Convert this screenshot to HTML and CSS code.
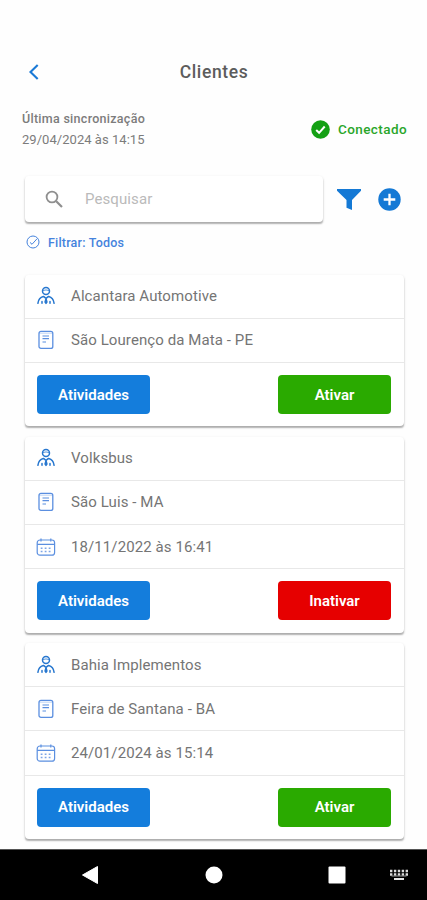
FILE: index.html
```html
<!DOCTYPE html>
<html lang="pt-BR">
<head>
<meta charset="utf-8">
<title>Clientes</title>
<link rel="stylesheet" href="styles.css">
</head>
<body>
<svg class="defs" width="0" height="0">
  <symbol id="person" viewBox="0 0 18 20">
    <g fill="none" stroke="currentColor" stroke-width="1.5" stroke-linecap="round" stroke-linejoin="round">
      <circle cx="9" cy="5" r="3.5"/><path d="M6 4.4Q9 3.4 12 4.4" stroke-width=".8"/><path d="M6.3 10.6C3.2 11.4 1.4 13.8 .9 17.3M11.7 10.6C14.8 11.4 16.6 13.8 17.1 17.3M5 17.3V15.4M13 17.3V15.4M6.8 10.6L9 12.4L11.2 10.6M9 12.6L8.1 16L9 17.4L9.9 16Z"/>
    </g>
  </symbol>
  <symbol id="note" viewBox="0 0 16 20">
    <g fill="none" stroke="currentColor" stroke-width="1.3">
      <rect x="1" y="1.4" width="13.8" height="17" rx="2"/><path d="M1.2 3.2H14.6" opacity=".3"/><path d="M4.5 6H11M4.5 8.7H11M4.5 12H8" stroke-width="1.2"/>
    </g>
  </symbol>
  <symbol id="calendar" viewBox="0 0 20 20">
    <g fill="none" stroke="currentColor" stroke-width="1.2">
      <rect x="1.2" y="3" width="17.4" height="15.2" rx="2.8"/><path d="M1.2 7.4H18.6M5 1.4V4.5M14.8 1.4V4.5"/><path d="M4.7 11.3H16M4.7 14.5H16" stroke-width="1.6" stroke-dasharray="1.8 2.2" opacity=".8"/>
    </g>
  </symbol>
</svg>
<div class="screen">
  <header class="top">
    <svg class="back" viewBox="0 0 12 18"><path d="M9.7 2L2.5 9L9.7 16" fill="none" stroke="currentColor" stroke-width="2.1"/></svg>
    <h1>Clientes</h1>
  </header>
  <section class="sync">
    <div class="sync-text"><div class="sync-label">Última sincronização</div><div class="sync-date">29/04/2024 às 14:15</div></div>
    <div class="status">
      <svg width="19" height="19" viewBox="0 0 19 19"><circle cx="9.5" cy="9.5" r="9.3" fill="#14a014"/><path d="M5.2 10L8.1 12.8L13.7 6.5" fill="none" stroke="#fff" stroke-width="2"/></svg>
      <span>Conectado</span>
    </div>
  </section>
  <section class="search-row">
    <div class="search">
      <svg width="19" height="19" viewBox="0 0 19 19" fill="none" stroke="#8f8f8f"><circle cx="7" cy="7" r="5.4" stroke-width="1.8"/><path d="M11.2 11.2L17 17" stroke-width="2.2"/></svg>
      <span>Pesquisar</span>
    </div>
    <svg class="funnel" width="26" height="23" viewBox="0 0 26 23"><path d="M1 1H25V2.8L16 12V22L10.5 19.8V12L1 2.8Z" fill="currentColor"/></svg>
    <svg class="add" width="23" height="23" viewBox="0 0 23 23"><circle cx="11.5" cy="11.5" r="11.2" fill="currentColor"/><path d="M11.5 5.7V17.3M5.7 11.5H17.3" stroke="#fff" stroke-width="2.3"/></svg>
  </section>
  <div class="filter">
    <svg width="14" height="14" viewBox="0 0 14 14" fill="none" stroke="currentColor"><circle cx="7" cy="7" r="6"/><path d="M4 7.4L6 9.3L11 3.8"/></svg>
    <span>Filtrar: Todos</span>
  </div>
  <main class="list">
    <article class="card">
      <div class="row"><svg class="icon person"><use href="#person"/></svg><span>Alcantara Automotive</span></div>
      <div class="row"><svg class="icon"><use href="#note"/></svg><span>São Lourenço da Mata - PE</span></div>
      <div class="actions"><button class="btn">Atividades</button><button class="btn green">Ativar</button></div>
    </article>
    <article class="card">
      <div class="row"><svg class="icon person"><use href="#person"/></svg><span>Volksbus</span></div>
      <div class="row"><svg class="icon"><use href="#note"/></svg><span>São Luis - MA</span></div>
      <div class="row"><svg class="icon"><use href="#calendar"/></svg><span>18/11/2022 às 16:41</span></div>
      <div class="actions"><button class="btn">Atividades</button><button class="btn red">Inativar</button></div>
    </article>
    <article class="card">
      <div class="row"><svg class="icon person"><use href="#person"/></svg><span>Bahia Implementos</span></div>
      <div class="row"><svg class="icon"><use href="#note"/></svg><span>Feira de Santana - BA</span></div>
      <div class="row"><svg class="icon"><use href="#calendar"/></svg><span>24/01/2024 às 15:14</span></div>
      <div class="actions"><button class="btn">Atividades</button><button class="btn green">Ativar</button></div>
    </article>
  </main>
  <nav class="navbar">
    <svg width="18" height="20" viewBox="0 0 18 20"><path d="M1.5 10L16.5 1.5V18.5Z" fill="#fff" stroke="#fff" stroke-linejoin="round"/></svg>
    <svg width="18" height="18" viewBox="0 0 18 18"><circle cx="9" cy="9" r="8.5" fill="#fff"/></svg>
    <svg width="18" height="18" viewBox="0 0 18 18"><rect x=".5" y=".5" width="17" height="17" rx="1" fill="#fff"/></svg>
    <svg width="18" height="12" viewBox="0 0 18 12"><path d="M0 2H18M0 5.5H18" stroke="#ddd" stroke-width="2.4" stroke-dasharray="2.4 1.5"/><path d="M1.5 7H16.5" stroke="#999"/><path d="M4 10H14" stroke="#fff" stroke-width="1.8"/></svg>
  </nav>
</div>
</body>
</html>
```
FILE: styles.css
```css
* { box-sizing: border-box; }
body { margin: 0; background: #fefefe; font-family: Roboto, "Liberation Sans", sans-serif; color: #757575; }
.defs { display: block; }
.screen { width: 427px; height: 900px; display: flex; flex-direction: column; overflow: hidden; }
.top { height: 44px; margin-top: 50px; display: grid; grid-template-columns: 1fr auto 1fr; align-items: center; }
.top h1 { grid-column: 2; margin: 0 0 0 1px; font-size: 17.5px; font-weight: 500; letter-spacing: .6px; color: #5c5c5c; }
.back { width: 12px; height: 18px; margin-left: 28px; color: #1b7ad6; }
.sync { height: 54px; margin-top: 8px; padding: 7px 20px 0 22px; display: flex; justify-content: space-between; }
.sync-text { font-size: 13px; line-height: 20.5px; white-space: nowrap; color: #7c7c7c; }
.sync-label { font-weight: 500; font-size: 12.5px; letter-spacing: .28px; }
.sync-date { letter-spacing: .04px; }
.status { height: 40px; display: flex; align-items: center; gap: 8px; color: #2aa62a; font-size: 13.5px; font-weight: 500; letter-spacing: .42px; }
.search-row { height: 46px; margin-top: 20px; padding-left: 25px; display: flex; align-items: center; color: #1479d5; }
.search { width: 298px; height: 46px; padding-left: 20px; display: flex; align-items: center; gap: 21px; background: #fff; border-radius: 4px; box-shadow: 0 2px 1.5px -.5px rgba(0,0,0,.26), 0 1px 3px rgba(0,0,0,.12); color: #bababa; font-size: 15px; letter-spacing: .1px; }
.funnel { margin-left: 13px; }
.add { margin-left: 16px; }
.filter { height: 20px; margin: 10px 0 0 26px; display: flex; align-items: center; gap: 8px; color: #4583dd; font-size: 12.5px; font-weight: 500; letter-spacing: .2px; }
.list { margin: 22.5px 23.5px 0 25px; flex: 1; display: flex; flex-direction: column; gap: 10.5px; }
.card { background: #fff; border-radius: 4px; box-shadow: 0 2px 1.5px -.5px rgba(0,0,0,.26), 0 1px 3px rgba(0,0,0,.12); }
.row { height: 44.15px; padding-left: 11px; display: flex; align-items: center; gap: 15px; border-bottom: 1px solid #e8e8e8; font-size: 15px; letter-spacing: .09px; white-space: nowrap; }
.icon { width: 20px; height: 20px; color: #5b8fe0; }
.icon.person { color: #2777cf; }
.actions { height: 63.5px; padding: 0 12.5px 0 12px; display: flex; justify-content: space-between; align-items: center; }
.btn { width: 113px; height: 39px; border: 0; padding: 0; border-radius: 4px; background: #147ddc; color: #fff; font: 600 15px Roboto, sans-serif; }
.btn.green { background: #2aaa00; }
.btn.red { background: #e60000; }
.navbar { height: 51px; flex: none; background: #000; border-top: 1px solid #555; display: grid; grid-template-columns: 124px 122.5px 62px 18px; align-items: center; padding-left: 81px; }
```
